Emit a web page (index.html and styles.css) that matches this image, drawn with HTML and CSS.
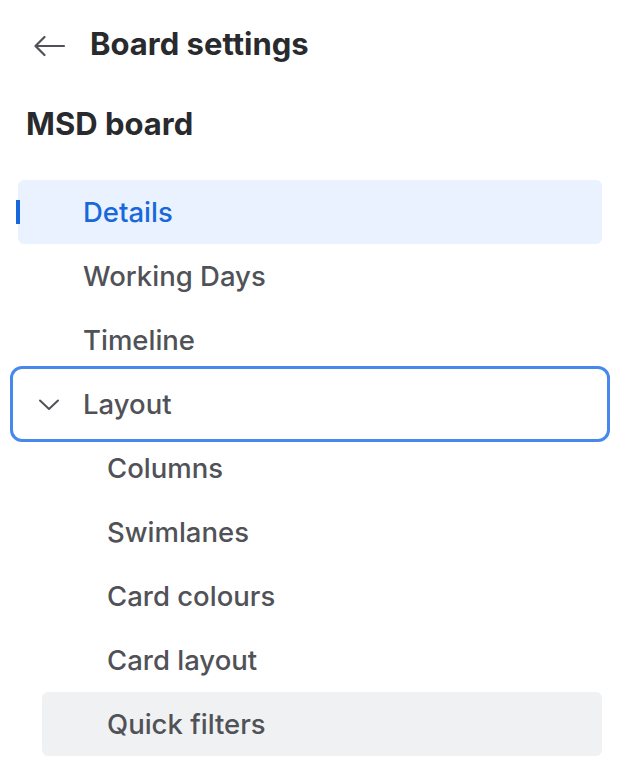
FILE: index.html
```html
<!DOCTYPE html>
<html lang="en">

<head>
    <meta charset="utf-8">
    <meta name="viewport" content="width=device-width, initial-scale=1">
    <title>Board settings</title>
    <link rel="stylesheet" href="styles.css">
</head>

<body>
    <header class="top">
        <button class="back" aria-label="Back">
            <svg width="32" height="32" viewBox="0 0 32 32" fill="none" stroke="currentColor" stroke-width="2.2" stroke-linecap="round" stroke-linejoin="round">
                <path d="M30 16H2"/>
                <path d="M10.5 7L1.5 16L10.5 25"/>
            </svg>
        </button>
        <h1>Board settings</h1>
    </header>

    <h2 class="board">MSD board</h2>

    <nav class="menu">
        <a class="item active" href="#">Details</a>
        <a class="item" href="#">Working Days</a>
        <a class="item" href="#">Timeline</a>
        <a class="item group focused" href="#">
            <svg class="chevron" width="24" height="24" viewBox="0 0 24 24" fill="none" stroke="currentColor" stroke-width="2" stroke-linecap="round" stroke-linejoin="round">
                <path d="M3 8.5l9 8.5 9-8.5"/>
            </svg>
            Layout
        </a>
        <div class="sub">
            <a class="item" href="#">Columns</a>
            <a class="item" href="#">Swimlanes</a>
            <a class="item" href="#">Card colours</a>
            <a class="item" href="#">Card layout</a>
            <a class="item hover" href="#">Quick filters</a>
        </div>
    </nav>
</body>

</html>
```

FILE: styles.css
```css
html {
    font-size: medium;
}

body {
    margin: 0;
    font-family: Inter, "Noto Sans", sans-serif;
    color: #292a2e;
    background: #fff;
}

.top {
    display: flex;
    align-items: center;
    gap: 24px;
    padding: 28px 0 0 34px;
    height: 32px;
}

.back {
    display: flex;
    margin-top: 4px;
    border: 0;
    padding: 0;
    background: none;
    color: #505258;
}

.top h1 {
    margin: 0;
    font-size: 31px;
    font-weight: 700;
    line-height: 32px;
}

.board {
    margin: 46px 0 0 26px;
    font-size: 31px;
    font-weight: 700;
    line-height: 36px;
}

.menu {
    display: flex;
    flex-direction: column;
    margin: 38px 22px 0 18px;
}

.sub {
    display: flex;
    flex-direction: column;
    padding-left: 24px;
}

.item {
    position: relative;
    display: flex;
    align-items: center;
    height: 64px;
    padding-left: 65px;
    border-radius: 6px;
    font-size: 27.5px;
    font-weight: 500;
    color: #505258;
    text-decoration: none;
}

.item.active {
    color: #1868db;
    background: #e9f2fe;
}

.item.active::before {
    content: "";
    position: absolute;
    left: -2px;
    top: 20px;
    width: 4px;
    height: 24px;
    background: #1868db;
}

.item.hover {
    background: #f0f1f2;
}

.chevron {
    position: absolute;
    left: 19px;
    top: 20px;
    color: #505258;
}

.item.focused::after {
    content: "";
    position: absolute;
    inset: -6px -8px;
    border: 3px solid #4688ec;
    border-radius: 12px;
}
```
